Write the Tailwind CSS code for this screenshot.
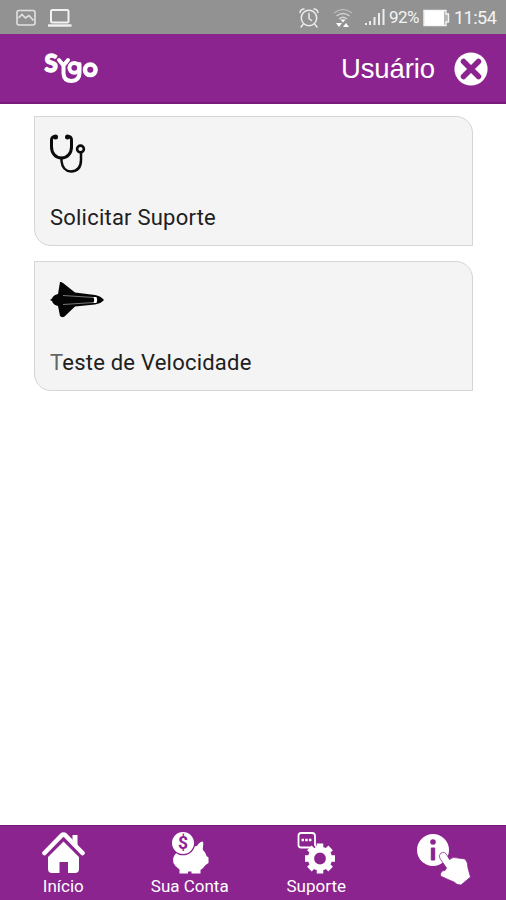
<!DOCTYPE html>
<html lang="pt-BR">
<head>
<meta charset="utf-8">
<title>Sygo</title>
<script src="https://cdn.jsdelivr.net/npm/@tailwindcss/browser@4"></script>
</head>
<body class="bg-white font-['Roboto',sans-serif]">
<div class="flex h-[900px] w-[506px] flex-col overflow-hidden bg-white">
  <!-- Status bar -->
  <div class="flex h-[34px] shrink-0 items-center bg-[#929292] pt-px pr-[11px] pl-4 text-[#f4f4f4]">
    <svg class="h-[18px] w-5" viewBox="0 0 20 18" fill="none" stroke="#e2e2e2" stroke-width="1.6"><rect x="1" y="1.5" width="18" height="14.5" rx="2"/><path d="M2.500 9 6 5.500 9.500 9 13 6.500 17.500 11.500"/></svg>
    <svg class="ml-[11px] h-5 w-[26px]" viewBox="0 0 26 20" fill="none" stroke="#f2f2f2" stroke-width="2"><rect x="4" y="2" width="17.500" height="12.500" rx="1.500"/><path d="M1 17.500H24.500" stroke-width="2.400"/></svg>
    <div class="ml-auto flex items-center">
      <svg class="h-[22px] w-[22px]" viewBox="0 0 22 22" fill="none" stroke="#ececec" stroke-width="1.500" stroke-linecap="round"><circle cx="11" cy="11" r="7.700"/><path d="M11 6.500v5l2.500 2M2 5.500C2.500 3.500 4 2 6 2M20 5.500C19.500 3.500 18 2 16 2M5 17.500 3 20M17 17.500 19 20"/></svg>
      <svg class="ml-[13px] h-[22px] w-5" viewBox="0 0 20 22" fill="none" stroke="#d2d2d2" stroke-width="1.400"><path d="M1 6Q10-1 19 6" stroke="#b8b8b8"/><path d="M3.500 9Q10 4 16.500 9"/><path d="M6 12Q10 8.500 14 12"/><path d="M7.500 12.500h5L10 15.500zM3 16h6l-3 4zM10 20h6l-3-4z" fill="#fff" stroke="none"/></svg>
      <svg class="ml-3 h-5 w-5" viewBox="0 0 20 20" fill="#ededed"><path d="M0 15h2v2H0zM4 13h2v4H4zM8.500 9h2v8h-2zM13 5h2v12h-2zM17.500 1h2v16h-2z"/></svg>
      <span class="ml-[4px] w-[32px] text-[17px] leading-none tracking-[-0.55px]">92%</span>
      <svg class="ml-[2px] h-[18px] w-[27px]" viewBox="0 0 27 18"><path d="M1 1.500h22v3.500h2.500v8H23v3.500H1z" fill="#b5b5b5" stroke="#f4f4f4" stroke-width="1.400"/><path d="M1.500 2H21v14H1.500z" fill="#fff"/></svg>
      <span class="ml-[4px] w-[41px] text-[18px] leading-none tracking-[-0.5px] whitespace-nowrap">11:54</span>
    </div>
  </div>
  <!-- App header -->
  <header class="flex h-[70px] shrink-0 items-center border-b-2 border-[#7a1a7c] bg-[#8c248f] pt-[2px] pr-[18px] pl-[40px]">
    <svg class="h-9 w-[62px] overflow-visible" viewBox="0 0 62 36" fill="#fff" stroke="#fff" font-family="Lato,sans-serif" font-weight="900">
      <text x="4.500" y="21" font-size="24" stroke-width="1.300">S</text>
      <path d="M19 9 23.500 14.500 28 9M23.500 14V22.500Q24 30 31.500 30 39.500 29.500 39.500 22V13" fill="none" stroke-width="4" stroke-linecap="round" stroke-linejoin="round"/>
      <circle cx="34.300" cy="16.800" r="4.900" fill="none" stroke-width="4"/>
      <circle cx="50.300" cy="18.800" r="5.300" fill="none" stroke-width="4.500"/>
    </svg>
    <span class="ml-auto font-['Liberation_Sans',sans-serif] text-[27.5px] leading-none tracking-[-0.1px] text-white">Usuário</span>
    <svg class="ml-[19px] h-[34px] w-[34px]" viewBox="0 0 34 34"><circle cx="17" cy="17" r="16.600" fill="#fff"/><path d="m9.500 9.500 15 15m0-15-15 15" stroke="#8c248f" stroke-width="5.500" stroke-linecap="round"/></svg>
  </header>
  <!-- Actions -->
  <main class="flex grow flex-col gap-[15px] px-[34px] pt-3 text-[22px] tracking-[0.22px] text-[#202020]">
    <section class="flex h-[130px] w-[439px] flex-col rounded-tr-[17px] rounded-bl-[17px] border border-[#d5d5d5] bg-[#f4f4f4] px-[15px] pt-[15px]">
      <svg class="h-[42px] w-[38px]" viewBox="0 0 38 42" fill="none" stroke="#0b0b0b" stroke-width="3" stroke-linecap="round"><path d="M6 4.500Q1.500 4 1.500 8V15C1.500 21 5.500 26 11.500 26S21.500 21 21.500 15V8Q21.500 4 17.500 4.500"/><path d="M11.500 26V29Q12.500 39 21 39.500 31 39 31 28V21" stroke-width="2.500"/><circle cx="30.500" cy="17" r="3.400" stroke-width="2.600"/><circle cx="5.500" cy="5" r="1"/><circle cx="17.500" cy="5" r="1"/></svg>
      <span class="mt-[30px] leading-[28px]">Solicitar Suporte</span>
    </section>
    <section class="flex h-[130px] w-[439px] flex-col rounded-tr-[17px] rounded-bl-[17px] border border-[#d5d5d5] bg-[#f4f4f4] px-[15px] pt-[15px]">
      <svg class="h-[42px] w-[56px]" viewBox="0 0 56 42"><path d="M10 5Q11 4.500 13 6L25 15.500 45 18Q51 19 54 23 51 26.500 45 27.500L25 29.500 14.500 39.500Q12 41 10 39L8 29Q3 28 2 24L0 23 2 21.500Q3 18 8 17Z" fill="#050505"/><path d="M13 18.500 44 20.500M13 27.500 44 25.500" stroke="#777" stroke-width="1"/><path d="M43.500 20Q45 23 43.500 26H46.500Q48 23 46.500 20Z" fill="#fff"/></svg>
      <span class="mt-[30px] leading-[28px]"><span class="text-[#666]">T</span>este de Velocidade</span>
    </section>
  </main>
  <!-- Bottom navigation -->
  <nav class="grid h-[75px] shrink-0 grid-cols-4 border-t border-[#741779] bg-[#8c248f] text-center text-[17px] leading-[20px] text-white">
    <div class="flex flex-col items-center pt-[6px]">
      <svg class="h-[44px] w-[44px]" viewBox="0 0 44 44"><path d="M3.500 21 20.500 3.500Q22.500 1.800 24.500 3.500L41.500 21" fill="none" stroke="#fff" stroke-width="4.600" stroke-linecap="round" stroke-linejoin="round"/><path d="M31.500 3h5V14l-5-5ZM22.500 9.500 38 25V37Q38 41 34 41H27V30H18.500V41H11Q7 41 7 37V25Z" fill="#fff"/></svg>
      <span>Início</span>
    </div>
    <div class="flex flex-col items-center pt-[6px]">
      <svg class="h-[44px] w-[40px]" viewBox="0 0 40 44" fill="#fff"><path d="M4 24Q9 15 20 15L27 14Q29 10 32.500 9.500 33.500 10 33.300 12L32.700 17.500Q35.500 20.500 36.500 24L38.500 25.500V31L35.500 33Q33.500 36 30.500 38V41.500H21.500V39.500H18V41.500H9.500V37.500Q0 31 4 24Z"/><circle cx="13" cy="11" r="12.300" fill="#8c248f"/><circle cx="13" cy="11" r="11"/><text x="13" y="17.300" text-anchor="middle" font-family="Roboto,sans-serif" font-size="17.500" font-weight="700" fill="#8c248f">$</text></svg>
      <span>Sua Conta</span>
    </div>
    <div class="flex flex-col items-center pt-[6px]">
      <svg class="h-[44px] w-[40px]" viewBox="0 0 40 44"><path d="M15.500 15.500H5Q2.500 15.500 2.500 13V3.500Q2.500 1 5 1H16Q19 1 19 4V13L21 16" fill="none" stroke="#fff" stroke-width="1.800"/><path d="M5.500 8h2.500m1.200 0h2.500m1.200 0h2.500" stroke="#fff" stroke-width="2.500"/><g transform="translate(24 26.500)" fill="none" stroke="#fff"><circle r="9" stroke-width="6.200"/><path d="M0-10V-15M0 10V15M-10 0H-15M10 0H15M-7.500-7.500-10.600-10.600M7.500 7.500 10.600 10.600M7.500-7.500 10.600-10.600M-7.500 7.500-10.600 10.600" stroke-width="6.500"/></g></svg>
      <span>Suporte</span>
    </div>
    <div class="flex flex-col items-center pt-[5px]">
      <svg class="h-[56px] w-[56px]" viewBox="0 0 56 56" fill="#fff"><circle cx="18" cy="19" r="16"/><circle cx="18" cy="11" r="2.800" fill="#8c248f"/><path d="M16.300 17H19.700V29H16.300Z" fill="#8c248f" stroke="#8c248f"/><path d="M25.500 22.500Q30 19.500 32.500 25L34.500 28.500Q38 25 43 27L50 28Q53 31 53 37L55.500 46 46 54Q42 54.500 39 51L33 48.500 25.500 45Q25 39.500 30 39.500L31.500 37 25 27.500Q23.500 24 25.500 22.500Z" stroke="#8c248f" stroke-width=".8"/></svg>
    </div>
  </nav>
</div>
</body>
</html>
